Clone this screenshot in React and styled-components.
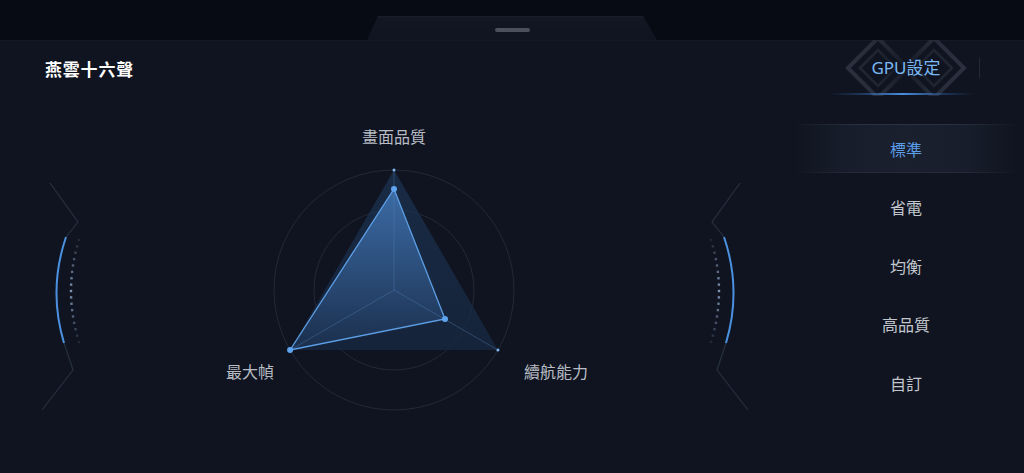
import React from "react";
import styled, { createGlobalStyle } from "styled-components";

const GlobalStyle = createGlobalStyle`
  html, body {
    margin: 0;
    padding: 0;
    background: #070b14;
  }
  body {
    font-family: "Noto Sans", "Noto Sans CJK TC", sans-serif;
  }
`;

const Page = styled.div`
  width: 1024px;
  height: 473px;
  display: flex;
  flex-direction: column;
  overflow: hidden;
  background: #070b14;
`;

const TopBar = styled.div`
  height: 40px;
  flex-shrink: 0;
  display: flex;
  justify-content: center;
  align-items: flex-end;
`;

const Notch = styled.div`
  width: 290px;
  height: 24px;
  box-sizing: border-box;
  padding-top: 12px;
  display: flex;
  justify-content: center;
  background: linear-gradient(180deg, #1a1f2b 0, #121723 2px, #0f1420 100%);
  clip-path: polygon(11px 0, calc(100% - 14px) 0, 100% 100%, 0 100%);
`;

const Handle = styled.span`
  width: 35px;
  height: 4px;
  border-radius: 2px;
  background: #4b505c;
`;

const Panel = styled.div`
  flex: 1;
  display: flex;
  background: #0f1420;
  box-shadow: inset 0 1px 0 #141925;
`;

const LeftArea = styled.div`
  flex: 1;
  display: flex;
  flex-direction: column;
`;

const Title = styled.div`
  margin: 18px 0 0 45px;
  font-size: 17px;
  font-weight: 700;
  line-height: 24px;
  color: #ffffff;
  letter-spacing: 0.8px;
`;

const ChartRow = styled.div`
  margin: 38px 0 0 35px;
  width: 720px;
  height: 300px;
  display: grid;
  grid-template-columns: 50px 1fr 50px;
  justify-items: center;
`;

const DecoSvg = styled.svg`
  display: block;
  transform: ${(p) => (p.$flip ? "scaleX(-1)" : "none")};
`;

const ChartSvg = styled.svg`
  display: block;
  overflow: visible;
`;

const RightColumn = styled.div`
  width: 224px;
  margin-right: 6px;
  display: flex;
  flex-direction: column;
`;

const Header = styled.div`
  position: relative;
  height: 56px;
  display: flex;
  justify-content: center;
  align-items: center;
  overflow: hidden;

  &::after {
    content: "";
    position: absolute;
    left: 36px;
    right: 43px;
    bottom: 1px;
    height: 2px;
    background: linear-gradient(
      90deg,
      rgba(60, 120, 200, 0) 0%,
      rgba(60, 120, 200, 0.4) 25%,
      #4a8ee0 50%,
      rgba(60, 120, 200, 0.4) 75%,
      rgba(60, 120, 200, 0) 100%
    );
  }
`;

const Diamonds = styled.svg`
  position: absolute;
  left: 50%;
  top: 50%;
  transform: translate(-50%, -50%);
  pointer-events: none;
`;

const HeaderTitle = styled.span`
  position: relative;
  font-size: 17px;
  line-height: 24px;
  color: #7ab8f5;
`;

const Divider = styled.span`
  position: absolute;
  right: 38px;
  top: 18px;
  width: 1.5px;
  height: 20px;
  background: #232936;
`;

const MenuList = styled.div`
  margin-top: 28px;
  display: flex;
  flex-direction: column;
  gap: 9.5px;
`;

const MenuItem = styled.div`
  height: 49px;
  display: flex;
  justify-content: center;
  align-items: center;
  font-size: 16px;
  color: ${(p) => (p.$active ? "#5b9de8" : "#c3c6cd")};
  background: ${(p) =>
    p.$active
      ? `linear-gradient(90deg, rgba(50,56,70,0), #2b313e 30%, #2b313e 70%, rgba(50,56,70,0)) top / 100% 1px no-repeat,
         linear-gradient(90deg, rgba(50,56,70,0), #262c38 30%, #262c38 70%, rgba(50,56,70,0)) bottom / 100% 1px no-repeat,
         linear-gradient(90deg, rgba(24,30,43,0), #171d2a 22%, #1a202d 50%, #171d2a 78%, rgba(24,30,43,0))`
      : "transparent"};
`;

const modes = ["標準", "省電", "均衡", "高品質", "自訂"];

function Deco({ flip }) {
  const dots = [];
  const n = 16;
  for (let i = 0; i <= n; i++) {
    const t = i / n;
    const x = (1 - t) * (1 - t) * 44 + 2 * (1 - t) * t * 28 + t * t * 44;
    const y = (1 - t) * (1 - t) * 120 + 2 * (1 - t) * t * 171 + t * t * 222;
    const o = 0.15 + 0.75 * (1 - Math.abs(t - 0.5) * 2);
    dots.push(
      <rect key={i} x={x - 1.2} y={y - 1.2} width="2.4" height="2.4" fill="#8aa2c3" opacity={o} />
    );
  }
  return (
    <DecoSvg $flip={flip} width="50" height="300" viewBox="0 0 50 300">
      <path
        d="M15 63 L43 102 L31 117 M29 223 L38 250 L7 290"
        fill="none"
        stroke="#283040"
        strokeWidth="1.2"
      />
      <path d="M31 117 Q13 170 29 223" fill="none" stroke="#4b91e0" strokeWidth="2" />
      {dots}
    </DecoSvg>
  );
}

function Radar() {
  const cx = 219;
  const cy = 170;
  const R = 120;
  const outer = [
    [cx, cy - R],
    [cx + R * 0.866, cy + R / 2],
    [cx - R * 0.866, cy + R / 2],
  ];
  const inner = [
    [cx, 69],
    [270, 199],
    [cx - R * 0.866, cy + R / 2],
  ];
  const pts = (a) => a.map((p) => p.join(",")).join(" ");
  const labelStyle = { fontSize: 16, fill: "#b8bcc4" };
  return (
    <ChartSvg width="440" height="300" viewBox="0 0 440 300">
      <defs>
        <linearGradient id="innerFill" x1="0" y1="0" x2="0" y2="1">
          <stop offset="0" stopColor="#3f72b0" stopOpacity="0.9" />
          <stop offset="1" stopColor="#1b2f4d" stopOpacity="0.95" />
        </linearGradient>
        <linearGradient id="outerFill" x1="0" y1="0" x2="0" y2="1">
          <stop offset="0" stopColor="#1d3455" stopOpacity="0.7" />
          <stop offset="1" stopColor="#172942" stopOpacity="0.75" />
        </linearGradient>
      </defs>
      {[120, 80, 40].map((r) => (
        <circle key={r} cx={cx} cy={cy} r={r} fill="none" stroke="#222938" strokeWidth="1" />
      ))}
      <polygon points={pts(outer)} fill="url(#outerFill)" />
      <polygon points={pts(inner)} fill="url(#innerFill)" />
      {outer.map((p, i) => (
        <line key={i} x1={cx} y1={cy} x2={p[0]} y2={p[1]} stroke="#5a86bb" strokeOpacity="0.35" strokeWidth="1" />
      ))}
      <polygon points={pts(inner)} fill="none" stroke="#5d9fe6" strokeWidth="1.3" />
      {inner.map((p, i) => (
        <circle key={i} cx={p[0]} cy={p[1]} r="3" fill="#5fa4ef" />
      ))}
      <circle cx={outer[0][0]} cy={outer[0][1]} r="1.5" fill="#7fb5f0" />
      <circle cx={outer[1][0]} cy={outer[1][1]} r="1.5" fill="#7fb5f0" />
      <text x={cx} y="17" textAnchor="middle" dominantBaseline="central" style={labelStyle}>
        畫面品質
      </text>
      <text x="75" y="252" textAnchor="middle" dominantBaseline="central" style={labelStyle}>
        最大幀
      </text>
      <text x="381" y="252" textAnchor="middle" dominantBaseline="central" style={labelStyle}>
        續航能力
      </text>
    </ChartSvg>
  );
}

export default function App() {
  return (
    <Page>
      <GlobalStyle />
      <TopBar>
        <Notch>
          <Handle />
        </Notch>
      </TopBar>
      <Panel>
        <LeftArea>
          <Title>燕雲十六聲</Title>
          <ChartRow>
            <Deco />
            <Radar />
            <Deco flip />
          </ChartRow>
        </LeftArea>
        <RightColumn>
          <Header>
            <Diamonds width="130" height="60" viewBox="0 0 130 60">
              <defs>
                <linearGradient id="dia" x1="0" y1="0" x2="130" y2="0" gradientUnits="userSpaceOnUse">
                  <stop offset="0" stopColor="#2c3240" />
                  <stop offset="0.3" stopColor="#252b38" />
                  <stop offset="0.5" stopColor="#161b26" />
                  <stop offset="0.7" stopColor="#252b38" />
                  <stop offset="1" stopColor="#2c3240" />
                </linearGradient>
              </defs>
              <path d="M7 30 L37 0 L67 30 L37 60 Z" fill="none" stroke="url(#dia)" strokeWidth="4" />
              <path d="M19 30 L37 12 L55 30 L37 48 Z" fill="none" stroke="url(#dia)" strokeWidth="2.5" opacity="0.7" />
              <path d="M63 30 L93 0 L123 30 L93 60 Z" fill="none" stroke="url(#dia)" strokeWidth="4" />
              <path d="M75 30 L93 12 L111 30 L93 48 Z" fill="none" stroke="url(#dia)" strokeWidth="2.5" opacity="0.7" />
            </Diamonds>
            <HeaderTitle>GPU設定</HeaderTitle>
            <Divider />
          </Header>
          <MenuList>
            {modes.map((m, i) => (
              <MenuItem key={m} $active={i === 0}>
                {m}
              </MenuItem>
            ))}
          </MenuList>
        </RightColumn>
      </Panel>
    </Page>
  );
}
